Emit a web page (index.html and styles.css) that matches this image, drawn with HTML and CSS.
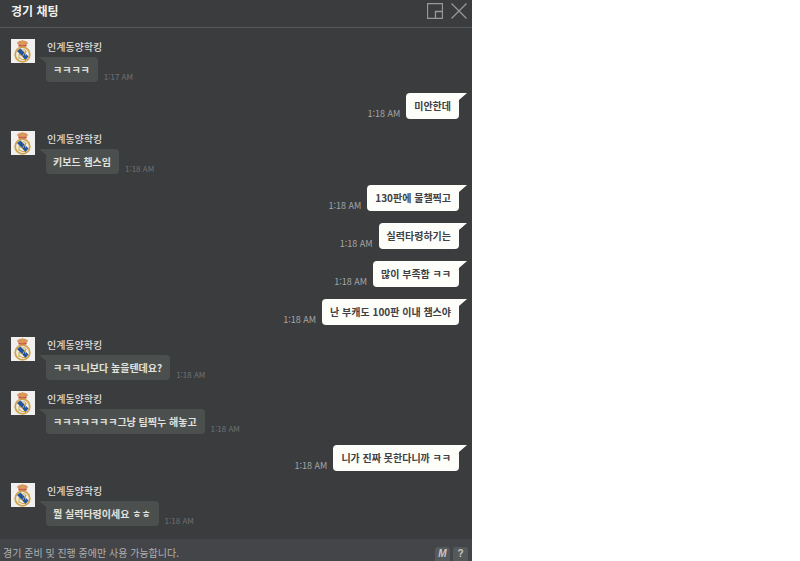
FILE: index.html
```
<!DOCTYPE html>
<html lang="ko">
<head>
<meta charset="utf-8">
<title>경기 채팅</title>
<link rel="stylesheet" href="styles.css">
</head>

<body>
<!-- club crest, reused by every avatar -->
<svg class="defs" aria-hidden="true">
<symbol id="crest" viewBox="0 0 24 24">
<rect width="24" height="24" fill="#f1f0ef"/>
<path d="M8 7L6 3.500Q8 1.500 11.500 1.500Q15 1.500 17 3.500L15 7Q11.500 8 8 7Z" fill="#e08a68"/>
<path d="M6.500 4.500Q9 2.500 11.500 5Q14 2.500 16.500 4.500M11.500 1V5" fill="none" stroke="#d0a850"/>
<path d="M7.500 6.500Q11.500 8 15.500 6.500" fill="none" stroke="#c8503c" stroke-width="1.500"/>
<circle cx="11.500" cy="15.500" r="7.300" fill="#f0eee8" stroke="#cda44c" stroke-width="1.800"/>
<path d="M6 12L9.500 9.500L17.500 17.500L14.500 21Z" fill="#24539c"/>
<path d="M8 20V15L11.500 17.500L14.500 12V16.500M8 18.500Q11 21.500 14 20.500M11.500 11Q14 9.500 15.500 13" fill="none" stroke="#cda548"/>
</symbol>
</svg>

<main class="chat">
<header class="chat-head">
<h1>경기 채팅</h1>
<button type="button" class="icon" aria-label="작게 보기"><svg viewBox="0 0 16 16"><path d="M.5 .5H15.500V15.500H.5ZM8.500 15V8.500H15"/></svg></button>
<button type="button" class="icon" aria-label="닫기"><svg viewBox="0 0 16 16"><path d="M.5 .5L15.500 15.500M15.500 .5L.5 15.500"/></svg></button>
</header>

<ol class="messages">
<li class="msg">
<svg class="avatar" aria-hidden="true"><use href="#crest"/></svg>
<div class="body"><div class="name">인계동양학킹</div><div class="line"><p class="bubble">ㅋㅋㅋㅋ</p><time>1:17 AM</time></div></div>
</li>
<li class="msg mine"><time>1:18 AM</time><p class="bubble">미안한데</p></li>
<li class="msg">
<svg class="avatar" aria-hidden="true"><use href="#crest"/></svg>
<div class="body"><div class="name">인계동양학킹</div><div class="line"><p class="bubble">키보드 챔스임</p><time>1:18 AM</time></div></div>
</li>
<li class="msg mine"><time>1:18 AM</time><p class="bubble">130판에 물챌찍고</p></li>
<li class="msg mine"><time>1:18 AM</time><p class="bubble">실력타령하기는</p></li>
<li class="msg mine"><time>1:18 AM</time><p class="bubble">많이 부족함 ㅋㅋ</p></li>
<li class="msg mine"><time>1:18 AM</time><p class="bubble">난 부캐도 100판 이내 챔스야</p></li>
<li class="msg">
<svg class="avatar" aria-hidden="true"><use href="#crest"/></svg>
<div class="body"><div class="name">인계동양학킹</div><div class="line"><p class="bubble">ㅋㅋㅋ니보다 높을텐데요?</p><time>1:18 AM</time></div></div>
</li>
<li class="msg">
<svg class="avatar" aria-hidden="true"><use href="#crest"/></svg>
<div class="body"><div class="name">인계동양학킹</div><div class="line"><p class="bubble">ㅋㅋㅋㅋㅋㅋㅋ그냥 팀찍누 해놓고</p><time>1:18 AM</time></div></div>
</li>
<li class="msg mine"><time>1:18 AM</time><p class="bubble">니가 진짜 못한다니까 ㅋㅋ</p></li>
<li class="msg">
<svg class="avatar" aria-hidden="true"><use href="#crest"/></svg>
<div class="body"><div class="name">인계동양학킹</div><div class="line"><p class="bubble">뭘 실력타령이세요 ㅎㅎ</p><time>1:18 AM</time></div></div>
</li>
</ol>

<form class="chat-foot">
<input type="text" aria-label="메시지" placeholder="경기 준비 및 진행 중에만 사용 가능합니다." disabled>
<button type="button" class="key slant">M</button>
<button type="button" class="key">?</button>
</form>
</main>
</body>
</html>
```

FILE: styles.css
```
* {
 box-sizing:border-box;
}

body {
 margin:0;
 background:#fff;
 font-family:"Noto Sans CJK KR","Noto Sans",sans-serif;
 font-size:10px;
 line-height:16px;
}

.defs {
 display:none;
}

.chat {
 display:flex;
 flex-direction:column;
 width:59%;
 min-height:100vh;
 background:#3a3c3e;
}

.chat-head {
 display:flex;
 align-items:center;
 gap:8px;
 height:28px;
 padding:0 5px 6px 11px;
 border-bottom:1px solid #55585a;
}

.chat-head h1 {
 flex:1;
 margin:0;
 color:#f0f0ee;
 font-size:12px;
 font-weight:700;
}

.icon {
 width:16px;
 height:16px;
 padding:0;
 border:0;
 background:none;
}

.icon svg {
 display:block;
 fill:none;
 stroke:#96989a;
 stroke-width:1.3;
}

.messages {
 flex:1;
 margin:0;
 padding:11px 13px 2px 11px;
 list-style:none;
}

.msg {
 display:flex;
 margin-bottom:11px;
}

.avatar {
 width:24px;
 height:24px;
 margin-right:11px;
}

.name {
 height:18px;
 padding-left:1px;
 color:#dededb;
 font-weight:500;
}

.line {
 display:flex;
 align-items:flex-end;
 gap:6px;
}

.bubble {
 position:relative;
 margin:0;
 padding:5px 8px 4px 7px;
 border-radius:0 4px 4px 4px;
 background:#4b504f;
 color:#e2e2de;
 font-weight:700;
}

.bubble::before {
 content:"";
 position:absolute;
 top:0;
 left:-7px;
 width:7px;
 height:6px;
 background:#4b504f;
 clip-path:polygon(0 0,100% 0,100% 100%);
}

time {
 color:#707274;
 font-size:8px;
 line-height:10px;
}

.mine {
 justify-content:flex-end;
 align-items:flex-end;
 gap:6px;
 margin-bottom:12px;
}

.mine .bubble {
 padding:5px 8px;
 border-radius:4px 0 4px 4px;
 background:#fdfdf9;
 color:#3d4145;
}

.mine .bubble::before {
 left:100%;
 width:8px;
 height:7px;
 background:#fdfdf9;
 clip-path:polygon(0 0,100% 0,0 100%);
}

.mine time {
 color:#a5a7a8;
 font-size:9px;
 line-height:11px;
}

.chat-foot {
 display:flex;
 align-items:flex-end;
 gap:3px;
 height:22px;
 padding:0 4px 0 3px;
 background:#444548;
}

.chat-foot input {
 flex:1;
 min-width:0;
 height:16px;
 padding:0;
 border:0;
 background:none;
 font:inherit;
}

.chat-foot input::placeholder {
 color:#b0b1b2;
}

.key {
 width:15px;
 height:14px;
 padding:0;
 border:0;
 border-radius:3px 3px 0 0;
 background:#55595a;
 color:#c6c8c8;
 font-family:"Liberation Sans",Arial,sans-serif;
 font-size:10px;
 font-weight:700;
 line-height:14px;
}

.slant {
 font-style:italic;
}
```
